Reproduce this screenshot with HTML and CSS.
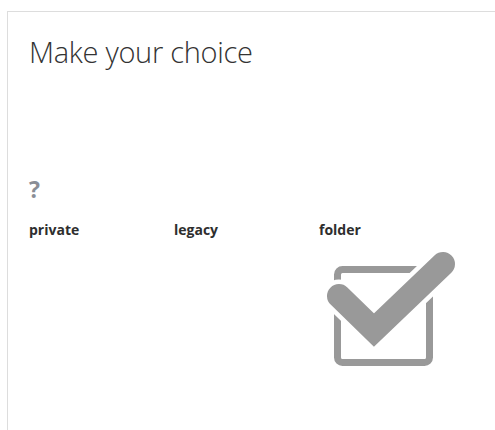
FILE: index.html
```html
<!DOCTYPE html>
<html>
<head>
<meta charset="utf-8">
<link rel="stylesheet" href="styles.css">
</head>
<body>
<div class="panel">
  <h1 class="title">Make your choice</h1>
  <div class="question">?</div>
  <div class="options">
    <div class="option"><span class="label">private</span></div>
    <div class="option"><span class="label">legacy</span></div>
    <div class="option">
      <span class="label">folder</span>
      <svg class="check" width="140" height="125" viewBox="319 250 140 125" xmlns="http://www.w3.org/2000/svg">
        <rect x="337.5" y="270.5" width="92" height="93" rx="5" fill="none" stroke="#999" stroke-width="7"/>
        <polyline points="339,297 374,331 443,265" fill="none" stroke="#fff" stroke-width="33" stroke-linecap="round" stroke-linejoin="miter"/>
        <polyline points="339,297 374,331 443,265" fill="none" stroke="#999" stroke-width="24" stroke-linecap="round" stroke-linejoin="miter"/>
      </svg>
    </div>
  </div>
</div>
</body>
</html>
```

FILE: styles.css
```css
html, body {
  margin: 0;
  padding: 0;
  background: #fff;
}
body {
  font-family: "Open Sans", "Liberation Sans", sans-serif;
  color: #333;
  overflow: hidden;
}
.panel {
  margin: 11px 0 0 7px;
  border-top: 1px solid #ddd;
  border-left: 1px solid #ddd;
  padding: 0 0 0 21px;
  height: 430px;
  box-sizing: border-box;
}
.title {
  margin: 0;
  padding-top: 20px;
  font-weight: 300;
  font-size: 29px;
  line-height: 40px;
  color: #333;
  letter-spacing: -0.3px;
}
.question {
  margin-top: 102px;
  font-weight: 700;
  font-size: 23px;
  line-height: 30px;
  color: #8a8e96;
}
.options {
  display: flex;
  margin-top: 17px;
}
.option {
  width: 145px;
  display: flex;
  flex-direction: column;
  align-items: flex-start;
}
.label {
  font-weight: 700;
  font-size: 14px;
  line-height: 18px;
  color: #2e2e2e;
}
.check {
  display: block;
  margin-top: 10px;
  margin-left: 0px;
}
```
